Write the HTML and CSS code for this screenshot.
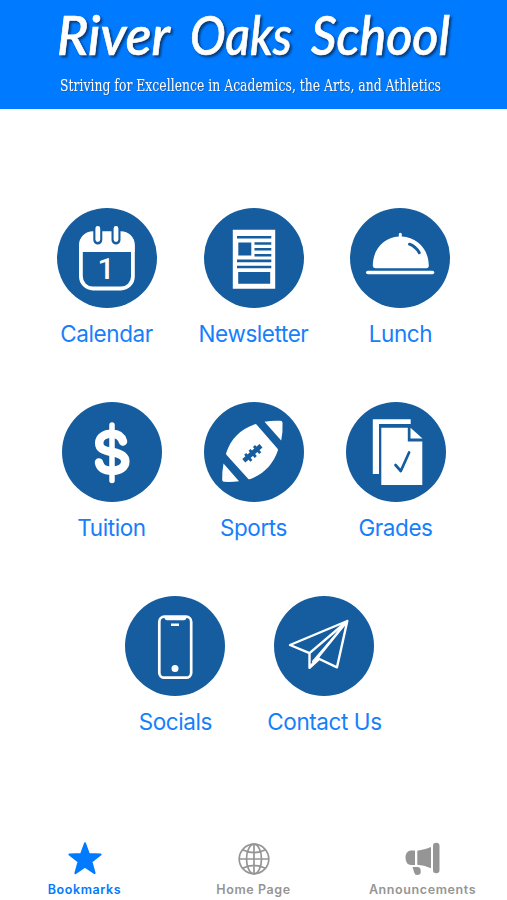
FILE: index.html
```html
<!DOCTYPE html>
<html lang="en">

<head>
  <meta charset="UTF-8">
  <meta name="viewport" content="width=device-width, initial-scale=1.0">
  <title>River Oaks School</title>
  <link rel="stylesheet" href="styles.css">
</head>

<body>
  <header class="header">
    <svg class="banner" viewBox="0 0 507 109">
      <g class="title">
        <text x="57" y="54.5" textLength="113" lengthAdjust="spacingAndGlyphs">River</text>
        <text x="190" y="54.5" textLength="102" lengthAdjust="spacingAndGlyphs">Oaks</text>
        <text x="311" y="54.5" textLength="139" lengthAdjust="spacingAndGlyphs">School</text>
      </g>
      <text class="motto" x="60" y="91" textLength="381" lengthAdjust="spacingAndGlyphs">Striving for Excellence in Academics, the Arts, and Athletics</text>
    </svg>
  </header>

  <main class="links">
    <a class="link">
      <svg class="icon" viewBox="0 0 100 100">
        <rect class="line" x="23.900" y="25.200" width="52" height="55.300" rx="12" stroke-width="3.800" />
        <path class="fill" d="M22.500 44V37a13 13 0 0 1 13-13h29a13 13 0 0 1 13 13v7z" />
        <path class="cut" d="M40.800 19v13M59 19v13" stroke-width="9" />
        <path class="line" d="M40.800 20.500v11M59 20.500v11" stroke-width="4.800" />
        <text class="day" x="49" y="70.500">1</text>
      </svg>
      <span class="name">Calendar</span>
    </a>
    <a class="link">
      <svg class="icon" viewBox="0 0 100 100">
        <path class="fill" d="M28.800 21.800h42.400v59H28.800z" />
        <path class="cut flat" d="M33 29.300h34.300M50.500 35.500h16.800M50.500 41.300h16.800M50.500 47.200h16.800M33 52.900h34.300M33 59h34.300" stroke-width="2.600" />
        <path class="hole" d="M34.300 34.500h13v13h-13zM34.200 64h32v11.800h-32z" />
      </svg>
      <span class="name">Newsletter</span>
    </a>
    <a class="link">
      <svg class="icon" viewBox="0 0 100 100">
        <path class="fill" d="M48.800 28.600v-2.400a1.500 1.500 0 0 1 3 0v2.400C67 29.300 78.600 41 78.800 57.500q0 2.700-2.400 2.700H25.200q-2.500 0-2.400-2.700C23 41 34 29.300 48.800 28.600z" />
        <path class="line" d="M17.800 64.500h64.700" stroke-width="3.600" />
        <path class="cut" d="M59.500 36.200q6.500 2.500 9.800 8.600" stroke-width="3" />
      </svg>
      <span class="name">Lunch</span>
    </a>
    <a class="link">
      <svg class="icon" viewBox="0 0 100 100">
        <path class="line" d="M50 23v55.500" stroke-width="5.500" />
        <path class="line" d="M61 39.500C59.500 34.500 56 31.800 50 31.800c-8 0-12.800 3.700-12.800 9.200s4 7.500 12.800 9 13.300 4 13.300 9.500-5.300 9.300-13.300 9.300c-7.500 0-12-3-13-8.300" stroke-width="8.500" />
      </svg>
      <span class="name">Tuition</span>
    </a>
    <a class="link">
      <svg class="icon" viewBox="0 0 100 100">
        <path class="fill" d="M52.500 22.400 73.400 46.500q.8 1 .5 2C69 62.500 60 72 45.800 77.200q-1 .3-1.700-.5L22.600 53q-.8-.8-.4-2C26.500 37.500 36 27.300 50.800 22.200q1-.4 1.700.2z" />
        <path class="fill" d="M60.500 19.800Q68 18.300 76.500 18.800q1.900.2 2 2Q79 30 77.200 38.500z" />
        <path class="fill" d="M19.500 61.500 35 79.300q-7.500.9-15 .5-1.800-.2-1.800-2-.2-8.300 1.300-16.300z" />
        <path class="cut flat" d="M39.800 58.800 57 43.700" stroke-width="4.600" />
        <path class="cut flat" d="M41.200 51.800l6.200 7.100M45.600 47.900l6.200 7.100M50 44l6.200 7.100" stroke-width="2.800" />
      </svg>
      <span class="name">Sports</span>
    </a>
    <a class="link">
      <svg class="icon" viewBox="0 0 100 100">
        <path class="fill" d="M26.800 17.300h37.900V22H33v50h-6.200z" />
        <path class="fill" d="M35.300 25.700h26.500v13.800h14.500V83h-41z" />
        <path class="fill" d="M64.500 25.700 76.500 36.500h-12z" />
        <path class="cut" d="M49.500 63l5.300 6 8.300-18.500" stroke-width="2.700" />
      </svg>
      <span class="name">Grades</span>
    </a>
    <a class="link">
      <svg class="icon" viewBox="0 0 100 100">
        <rect class="line" x="34.300" y="20.700" width="31.900" height="61" rx="5" stroke-width="2.700" />
        <path class="fill" d="M38 20h25q-1.500 1-1.800 2.500-.3 1.700-2.200 1.700H42q-2 0-2.300-1.700Q39.500 21 38 20z" />
        <path class="line flat" d="M46 28.700h8" stroke-width="2.600" />
        <circle class="fill" cx="50" cy="72.600" r="3.500" />
      </svg>
      <span class="name">Socials</span>
    </a>
    <a class="link">
      <svg class="icon" viewBox="0 0 100 100">
        <path class="line" d="M73.300 25 16 49l19.500 8.200zM73.300 25 63 71.300 44.300 62.500M35.500 57.200v14.600L73.300 25M35.500 71.800l9.800-9" stroke-width="2.400" />
        <path class="line" d="M38.500 65.500 73.300 25" stroke-width="1.200" />
      </svg>
      <span class="name">Contact Us</span>
    </a>
  </main>

  <nav class="tabs">
    <a class="tab active">
      <svg class="tab-icon" viewBox="0 0 36 36">
        <path d="M18 3.300 21.900 14l11.700.4-9.200 7.200 3.200 11.500L18 26.700l-9.600 6.400 3.200-11.500-9.200-7.200 11.700-.4z" fill="currentColor" stroke="currentColor" stroke-width="2" stroke-linejoin="round" />
      </svg>
      <span>Bookmarks</span>
    </a>
    <a class="tab">
      <svg class="tab-icon" viewBox="0 0 36 36" fill="none" stroke="currentColor" stroke-width="1.700">
        <circle cx="18" cy="19" r="14.800" />
        <ellipse cx="18" cy="19" rx="7.500" ry="14.800" />
        <path d="M18 4.200v29.600M3.200 19h29.600M6.500 9.700Q18 15.500 29.500 9.700M6.500 28.300Q18 22.500 29.500 28.300" />
      </svg>
      <span>Home Page</span>
    </a>
    <a class="tab">
      <svg class="tab-icon" viewBox="0 0 36 36" fill="currentColor">
        <path d="M9 10.500h1v14.500H5.500Q.5 24 .5 17.500q0-6 5-7z" />
        <path d="M12.300 10.700Q19.500 10 26 7v21.300Q19 25 12.300 24.800z" />
        <rect x="28" y="2.800" width="6.500" height="30.500" rx="3.200" />
        <path d="M7.500 27h5.500q2.700.5 2.700 3.500v2.500q-.5 2-3.500 2-2.500 0-3-2.500z" />
      </svg>
      <span>Announcements</span>
    </a>
  </nav>
</body>

</html>
```
FILE: styles.css
```css
* {
  box-sizing: border-box;
}

body {
  display: flex;
  flex-direction: column;
  height: 900px;
  margin: 0;
  font-family: Inter, "Liberation Sans", sans-serif;
  background-color: white;
  color: #1680fb;
}

.header {
  height: 108.5px;
  background-color: #007aff;
}

.banner {
  display: block;
  width: 507px;
  height: 109px;
  fill: white;
}

.title {
  font-family: Lato, sans-serif;
  font-size: 54px;
  font-style: italic;
  font-weight: 500;
  stroke: white;
  stroke-width: 0.7px;
  filter: drop-shadow(2px 2px 1px #073a78);
}

.motto {
  font-family: "DejaVu Serif", serif;
  font-size: 16px;
  filter: drop-shadow(1px 1px 0 #2261ab);
}

.links {
  display: flex;
  flex-wrap: wrap;
  justify-content: center;
  align-content: flex-start;
  gap: 50px 42px;
  flex: 1;
  padding: 99.5px 45px 0;
}

.link {
  display: flex;
  flex-direction: column;
  align-items: center;
  height: 144px;
  min-width: 100px;
}

.icon {
  width: 100px;
  height: 100px;
  border-radius: 50%;
  background-color: #155d9f;
}

.fill {
  fill: white;
}

.hole {
  fill: #155d9f;
}

.line,
.cut {
  fill: none;
  stroke: white;
  stroke-linecap: round;
  stroke-linejoin: round;
}

.cut {
  stroke: #155d9f;
}

.flat {
  stroke-linecap: butt;
}

.day {
  fill: white;
  font-family: Roboto, sans-serif;
  font-size: 30px;
  font-weight: 500;
  text-anchor: middle;
}

.name {
  margin-top: 10.5px;
  font-size: 22.5px;
  line-height: 30px;
  letter-spacing: -0.42px;
  white-space: nowrap;
}

.tabs {
  display: grid;
  grid-template-columns: repeat(3, 1fr);
  height: 60px;
}

.tab {
  display: flex;
  flex-direction: column;
  align-items: center;
  font-size: 12.5px;
  font-weight: 600;
  line-height: 16px;
  letter-spacing: 0.6px;
  color: #959595;
}

.tab-icon {
  width: 36px;
  height: 36px;
  margin-bottom: 6px;
}

.active {
  color: #007aff;
}
```
